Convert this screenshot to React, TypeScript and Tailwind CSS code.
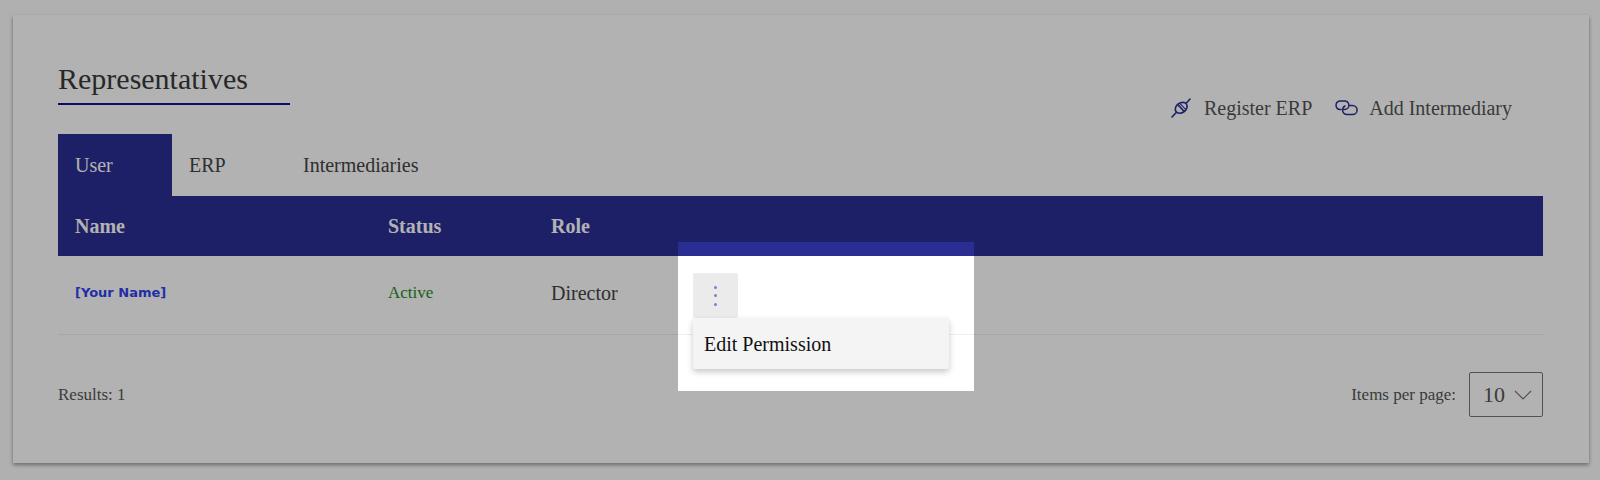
import React from 'react';

const SERIF = "font-['Liberation_Serif','Times_New_Roman',serif]";

function PlugIcon() {
  return (
    <svg width="20" height="20" viewBox="0 0 20 20" fill="none" stroke="#2a2e92" strokeWidth="1.6" strokeLinecap="round">
      <ellipse cx="10.2" cy="9.8" rx="6.4" ry="4.8" transform="rotate(-35 10.2 9.8)" />
      <path d="M6.6 6.4 L13 13.2" />
      <path d="M8.8 5.4 L14.6 11.4" strokeWidth="1.1" />
      <path d="M15.4 5 L19 1" />
      <path d="M5 14.8 L1 19" />
    </svg>
  );
}

function LinkIcon() {
  return (
    <svg width="24" height="16" viewBox="0 0 24 16" fill="none" stroke="#2a2e92" strokeWidth="1.5" strokeLinecap="round">
      <path d="M7 9.5 H5.5 a4.4 4.4 0 0 1 0 -8.6 H10.5 a4.4 4.4 0 0 1 4.4 4.3 a4.4 4.4 0 0 1 -4.4 4.3 H9.5" />
      <path d="M15.8 5.4 H18.5 a4.4 4.4 0 0 1 0 9.2 H13 a4.4 4.4 0 0 1 -4.4 -4.6 a4.4 4.4 0 0 1 2.4 -4" />
    </svg>
  );
}

export default function App() {
  return (
    <div className={`relative h-[480px] w-[1600px] overflow-hidden bg-[#fdfdfd] pt-[15px] pl-[13px] ${SERIF}`}>
      <section className="h-[448px] w-[1576px] bg-white pt-[46px] pl-[45px] pr-[46px] shadow-[0_2px_4px_rgba(0,0,0,0.4)]">
        <div className="flex items-start justify-between">
          <div className="w-[232px] border-b-2 border-[#10109a] pb-[6px] text-[30px] leading-[36px] text-[#3a3a3a]">
            Representatives
          </div>
          <div className="mt-[35px] mr-[31px] flex items-center text-[20px] leading-[24px] text-[#555]">
            <span className="flex items-center gap-[13px]">
              <PlugIcon />
              Register ERP
            </span>
            <span className="ml-[22px] flex items-center gap-[11px]">
              <LinkIcon />
              Add Intermediary
            </span>
          </div>
        </div>

        <div className="mt-[14px] flex h-[62px] text-[20px]">
          <div className="flex w-[114px] items-center bg-[#2a2e92] pl-[17px] text-white">User</div>
          <div className="flex w-[115px] items-center pl-[17px] text-[#444]">ERP</div>
          <div className="flex items-center pl-[16px] text-[#444]">Intermediaries</div>
        </div>

        <div className="grid h-[60px] grid-cols-[313px_163px_1fr] items-center bg-[#2a2e92] pl-[17px] text-[20px] font-bold text-white">
          <div>Name</div>
          <div>Status</div>
          <div>Role</div>
        </div>

        <div className="grid h-[79px] grid-cols-[313px_163px_142px_1fr] items-center border-b border-[#eee] pb-[5px] pl-[17px]">
          <div className="font-['DejaVu_Sans',sans-serif] text-[13px] font-bold text-[#3143ee]">[Your Name]</div>
          <div className="text-[17px] text-[#1e8a1e]">Active</div>
          <div className="text-[20px] text-[#444]">Director</div>
          <div className="relative z-20 mt-[6px] flex h-[45px] w-[45px] items-center justify-center rounded-[2px] bg-[#ebebeb]">
            <span className="flex flex-col gap-[5.5px]">
              <i className="block h-[3px] w-[3px] rounded-full bg-[#7a80cc]" />
              <i className="block h-[3px] w-[3px] rounded-full bg-[#7a80cc]" />
              <i className="block h-[3px] w-[3px] rounded-full bg-[#7a80cc]" />
            </span>
            <div className="absolute top-[45px] left-0 flex h-[51px] w-[256px] items-center rounded-[2px] bg-[#f4f4f4] pl-[11px] text-[20px] whitespace-nowrap text-[#111] shadow-[0_3px_6px_rgba(0,0,0,0.22)]">
              Edit Permission
            </div>
          </div>
        </div>

        <div className="mt-[37px] flex items-center justify-between">
          <div className="text-[17px] text-[#555]">Results: 1</div>
          <div className="flex items-center gap-[13px]">
            <span className="text-[17px] text-[#555]">Items per page:</span>
            <div className="flex h-[45px] w-[74px] items-center gap-[9px] rounded-[2px] border border-[#777] pl-[13px] text-[22px] text-[#555]">
              10
              <svg width="18" height="10" viewBox="0 0 18 10" fill="none" stroke="#777" strokeWidth="1.2">
                <path d="M1 1 L9 9 L17 1" />
              </svg>
            </div>
          </div>
        </div>
      </section>

      {/* dimmed backdrop with a cut-out round the open menu */}
      <div className="pointer-events-none absolute top-[242px] left-[678px] z-10 h-[149px] w-[296px] shadow-[0_0_0_2000px_rgba(0,0,0,0.3)]" />
    </div>
  );
}
